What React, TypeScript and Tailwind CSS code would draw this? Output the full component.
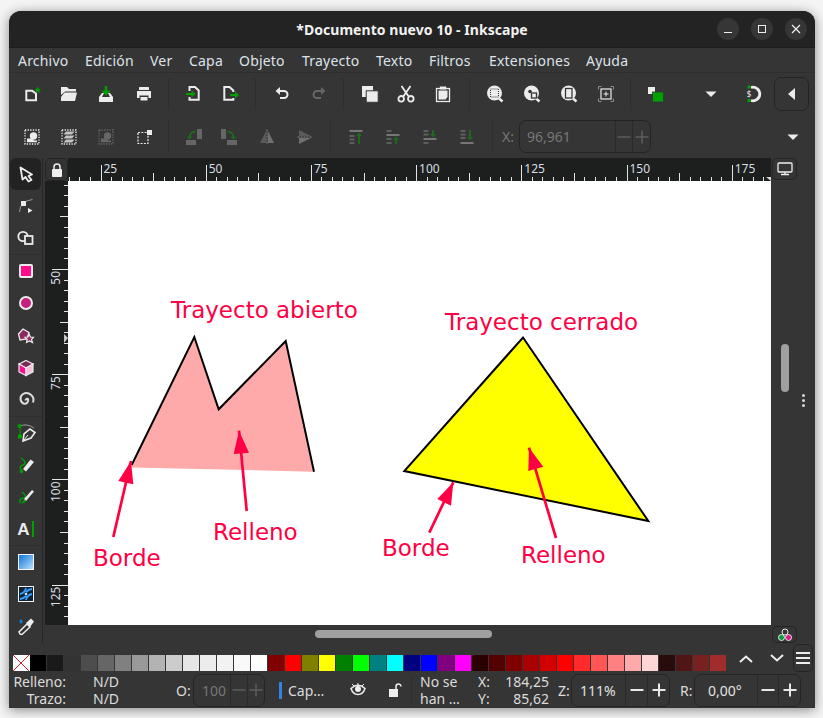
import React from "react";

const W = "#ececec";
const G = "#00a000";
const D = "#666666";
const DG = "#1d6a1d";
const RED = "#ff0044";

function I({ children, size = 24 }: { children: React.ReactNode; size?: number }) {
  return (
    <svg width={size} height={size} viewBox="-12 -12 24 24" className="block shrink-0">
      {children}
    </svg>
  );
}

function Btn({ children, cls }: { children: React.ReactNode; cls: string }) {
  return <div className={"flex items-center justify-center shrink-0 " + cls}>{children}</div>;
}

const Sep = () => <div className="w-px bg-[#2e2e2e] shrink-0 self-stretch my-[5px]" />;

/* ---------- toolbar 1 ---------- */
const NewDoc = () => (
  <I>
    <path d="M-5.700-3.300H0L4-.5V6.300H-5.700Z" fill="none" stroke={W} strokeWidth="2" />
    <polygon points="5.700,-7.500 6.600,-5.200 9,-5 7.200,-3.500 7.800,-1 5.700,-2.400 3.600,-1 4.200,-3.500 2.400,-5 4.800,-5.200" fill={G} />
  </I>
);
const OpenDoc = () => (
  <I>
    <path d="M-8-7H-2L0-5H7V-2.500H-4L-8 1Z" fill={W} />
    <path d="M-4.500-1.500H8L6 7H-8V3Z" fill={W} />
  </I>
);
const Save = () => (
  <I>
    <rect x="-1.200" y="-8" width="2.400" height="5" fill={G} />
    <polygon points="-4.500,-3.500 4.500,-3.500 0,1.500" fill={G} />
    <path d="M-4-1H-2L-4 3H4L2-1H4L7 3V8H-7V3Z" fill={W} />
  </I>
);
const Print = () => (
  <I>
    <rect x="-5" y="-7" width="10" height="3" rx=".5" fill={W} />
    <path d="M-7-3H7V4H4.500V1.500H-4.500V4H-7Z" fill={W} />
    <rect x="-3.500" y="3" width="7" height="3.500" fill={W} />
  </I>
);
const Import = () => (
  <I>
    <path d="M-3.500-3V-7H2L5.700-3.500V5.700H-3.500V3" fill="none" stroke={W} strokeWidth="2" />
    <rect x="-7" y="-1" width="6" height="2" fill={G} />
    <polygon points="-1.500,-3.500 2.500,0 -1.500,3.500" fill={G} />
  </I>
);
const Export = () => (
  <I>
    <path d="M3.300-2V-3.500L-.5-7H-5.700V5.700H3.300V4" fill="none" stroke={W} strokeWidth="2" />
    <rect x="0" y="0" width="6" height="2" fill={G} />
    <polygon points="5,-2.500 9,1 5,4.500" fill={G} />
  </I>
);
const Undo = ({ c = W, flip = false }: { c?: string; flip?: boolean }) => (
  <I>
    <g transform={flip ? "scale(-1,1)" : undefined}>
      <path d="M-3-3H2A3.500 3.500 0 0 1 2 4H-2" fill="none" stroke={c} strokeWidth="2" />
      <polygon points="-6.500,-3 -2,-7 -2,1" fill={c} />
    </g>
  </I>
);
const Copy = () => (
  <I>
    <rect x="-7" y="-8" width="11" height="11" fill={W} />
    <rect x="-2.800" y="-3.200" width="12" height="11.500" fill={W} stroke="#353535" />
  </I>
);
const Cut = () => (
  <I>
    <path d="M-4.500-8L3 3M4.500-8L-3 3" stroke={W} strokeWidth="1.800" fill="none" />
    <circle cx="-4.800" cy="4.800" r="2.800" fill="none" stroke={W} strokeWidth="1.800" />
    <circle cx="4.800" cy="4.800" r="2.800" fill="none" stroke={W} strokeWidth="1.800" />
  </I>
);
const Paste = () => (
  <I>
    <rect x="-6.500" y="-5.500" width="13" height="13" fill="none" stroke={W} strokeWidth="1.300" />
    <path d="M-4.500-3.500H4.500V3L2.500 5.500H-4.500Z" fill={W} />
    <rect x="-3.200" y="-7.500" width="6.400" height="3" fill={W} />
  </I>
);
const Mag = ({ children }: { children?: React.ReactNode }) => (
  <I>
    <path d="M4 4.500L7.500 7.500" stroke={W} strokeWidth="2.500" />
    <circle cx="-.5" cy="-1" r="7.500" fill={W} />
    {children}
  </I>
);
const ZoomSel = () => (
  <Mag>
    <rect x="-4.500" y="-5" width="8" height="8" fill="none" stroke="#353535" strokeWidth="1" strokeDasharray="1 1" />
  </Mag>
);
const ZoomDraw = () => (
  <Mag>
    <rect x="-.5" y="-1" width="5" height="5" fill={W} stroke="#353535" strokeWidth="1.300" />
    <circle cx="-2" cy="-2.500" r="1.800" fill="#353535" />
  </Mag>
);
const ZoomPage = () => (
  <Mag>
    <rect x="-3.500" y="-5.500" width="6.500" height="9.500" fill={W} stroke="#353535" strokeWidth="1.300" />
  </Mag>
);
const ZoomCenter = () => (
  <I>
    <path d="M-7.500-4.500V-7.500H-4.500M4.500-7.500H7.500V-4.500M7.500 4.500V7.500H4.500M-4.500 7.500H-7.500V4.500" fill="none" stroke="#8c8c8c" strokeWidth="1" />
    <rect x="-5" y="-5" width="10" height="10" fill="none" stroke={W} strokeWidth="1.200" />
    <path d="M-2.500 0H2.500M0-2.500V2.500" stroke={W} strokeWidth="1" />
  </I>
);
const Stack = () => (
  <I>
    <rect x="-7" y="-7" width="7" height="7" fill={W} />
    <rect x="-2.500" y="-2" width="11" height="10" fill={G} stroke="#353535" strokeWidth=".8" />
  </I>
);
const DownTri = () => (
  <I>
    <polygon points="-5.500,-2.500 5.500,-2.500 0,3" fill={W} />
  </I>
);
const Snap = () => (
  <I>
    <path d="M-3-6.500A6.800 6.800 0 1 1 -3 6.500" fill="none" stroke={W} strokeWidth="2.800" />
    <rect x="-6.500" y="-8.500" width="3" height="3" fill={G} />
    <rect x="-6.500" y="5" width="3" height="3" fill={G} />
    <text x="-5" y="3" fontSize="8" fill={W} textAnchor="middle" className="font-['Noto_Sans',sans-serif]">$</text>
  </I>
);

/* ---------- toolbar 2 ---------- */
const Dotted = ({ c = W }: { c?: string }) => (
  <rect x="-7" y="-7" width="14" height="14" fill="none" stroke={c} strokeWidth="1.300" strokeDasharray="1.300 1.300" />
);
const SelAll = ({ c = W }: { c?: string }) => (
  <I>
    <Dotted c={c} />
    <circle cx="1.500" cy="-1" r="3.700" fill={c} />
    <path d="M-5 1.500H0L2 3.500H5V5.300H-5Z" fill={c} />
  </I>
);
const SelLayers = () => (
  <I>
    <Dotted />
    <path d="M-3-5.500H5.500L3-2.500H-5.500Z" fill="#c4c4c4" />
    <path d="M-3-1.500H5.500L3 1.500H-5.500Z" fill="#c4c4c4" />
    <path d="M-3 2.500H5.500L3 5.500H-5.500Z" fill="#c4c4c4" />
  </I>
);
const Deselect = () => (
  <I>
    <rect x="-6" y="-4.500" width="10" height="11" fill="none" stroke={W} strokeWidth="1.200" strokeDasharray="2 1.300" />
    <rect x="3" y="-7" width="5" height="5" fill={W} />
  </I>
);
const Rotate = ({ flip = false }: { flip?: boolean }) => (
  <I>
    <g transform={flip ? "scale(-1,1)" : undefined}>
      <rect x="-7" y="3" width="10" height="5" fill={D} />
      <rect x="4" y="-8" width="5" height="10" fill={D} />
      <path d="M-3.500 1Q-3.500-5 2.500-5.500" fill="none" stroke={DG} strokeWidth="1.800" />
      <polygon points="-6.500,-.5 -.5,-.5 -3.500,2.500" fill={DG} />
    </g>
  </I>
);
const FlipH = () => (
  <I>
    <polygon points="-7,6 -1,-6 -1,6" fill="#5a5a5a" />
    <polygon points="1,-6 1,6 7,6" fill="#707070" />
    <path d="M0-7.500V7.500" stroke="#8a8a8a" strokeWidth="1" strokeDasharray="2 1" />
  </I>
);
const FlipV = () => (
  <I>
    <polygon points="-6,-7 -6,-1 6,-1" fill="#5a5a5a" />
    <polygon points="-6,1 -6,7 6,1" fill="#707070" />
    <path d="M-7.500 0H7.500" stroke="#8a8a8a" strokeWidth="1" strokeDasharray="2 1" />
  </I>
);
const Bars = ({ small, bar, up, y1, y2 }: { small: number[]; bar: number; up: boolean; y1: number; y2: number }) => (
  <I>
    {small.map((y) => (
      <rect key={y} x="-6.500" y={y} width="5" height="2" fill="#5e5e5e" />
    ))}
    <rect x="-6.500" y={bar} width="13" height="2" fill="#777" />
    <path d={`M3 ${y1}V${y2}`} stroke={DG} strokeWidth="2" />
    {up ? (
      <polygon points={`3,${y2 - 2.5} 0,${y2 + 1} 6,${y2 + 1}`} fill={DG} />
    ) : (
      <polygon points={`3,${y2 + 2.5} 0,${y2 - 1} 6,${y2 - 1}`} fill={DG} />
    )}
  </I>
);

/* ---------- tools ---------- */
const ToolSel = () => (
  <I>
    <path d="M-5.500-6.500L6 .5L2.500 2L5.500 6L2.500 7.500L-.5 3L-3.500 5.500Z" fill="#222" stroke={W} strokeWidth="1.800" strokeLinejoin="round" />
  </I>
);
const ToolNode = () => (
  <I>
    <path d="M-6.500 6Q-6-5 6.500-6.500" fill="none" stroke="#9a9a9a" strokeWidth="1" />
    <rect x="-5" y="-5" width="5" height="5" fill={W} />
    <polygon points="2,2 2,7 6.500,4.500" fill={W} />
  </I>
);
const ToolShape = () => (
  <I>
    <circle cx="-3" cy="-1.500" r="4.700" fill="none" stroke={W} strokeWidth="1.800" />
    <rect x="-1" y="-2" width="7.500" height="8" fill="#353535" stroke={W} strokeWidth="1.800" />
  </I>
);
const ToolRect = () => (
  <I>
    <rect x="-6" y="-6" width="12" height="12" rx="1" fill="#ff0d8f" stroke={W} strokeWidth="2" />
  </I>
);
const ToolCirc = () => (
  <I>
    <circle r="6" fill="#c6207c" stroke={W} strokeWidth="2" />
  </I>
);
const ToolStar = () => (
  <I>
    <polygon points="-3,-7 3,-3.500 1,3 -6,4 -7.500,-2" fill="#8e2a60" stroke={W} strokeWidth="1.300" />
    <polygon points="3,-2 4.500,1 7.500,1.300 5.500,3.500 6.500,6.500 3.500,5 .5,6.500 1.200,3.500 -1,1.300 2,1" fill="#8e2a60" stroke={W} strokeWidth="1.200" />
  </I>
);
const ToolBox = () => (
  <I>
    <polygon points="0,-7.500 7,-4 0,0 -7,-4" fill="#7c2a58" stroke={W} strokeWidth="1.200" />
    <polygon points="-7,-4 0,0 0,7.500 -7,4" fill="#ff0d8f" stroke={W} strokeWidth="1.200" />
    <polygon points="7,-4 0,0 0,7.500 7,4" fill="#f4c0da" stroke={W} strokeWidth="1.200" />
  </I>
);
const ToolSpiral = () => (
  <I>
    <path d="M-.5 .5A1.800 1.800 0 0 1 2 -1A3.500 3.500 0 0 1 -2.500 3.500A5.500 5.500 0 0 1 -3 -6A7 7 0 0 1 7 2.500" fill="none" stroke="#dcdcdc" strokeWidth="2" />
  </I>
);
const ToolPen = () => (
  <I>
    <path d="M-6-7V3" stroke={G} strokeWidth="1" />
    <path d="M-6-7Q1-10 8-5" fill="none" stroke="#9a9a9a" strokeWidth="1" />
    <circle cx="-6.500" cy="-7" r="2" fill={G} />
    <rect x="-8" y="1.500" width="4" height="4" fill={G} />
    <path d="M-3 8L-2 1L4-4L9-.5L5 5Z" fill="none" stroke={W} strokeWidth="1.600" />
    <path d="M-2 7L2 2" stroke={W} strokeWidth="1" />
  </I>
);
const ToolPencil = () => (
  <I>
    <path d="M-4 6Q-8 1-3 0Q2-2-5-7" fill="none" stroke={G} strokeWidth="1.500" />
    <path d="M-3 4L4.500-5.500L8-3L0 6.500Z" fill={W} />
    <circle cx="-4.500" cy="6.500" r="1.700" fill={G} />
  </I>
);
const ToolCalli = () => (
  <I>
    <path d="M-6 6Q-7 1-2 1Q2 0-4-5" fill="none" stroke={G} strokeWidth="1.500" />
    <path d="M-2 2L6-7L8-5.500L0 4Z" fill={W} />
    <path d="M-5 7L-2 2.500L.5 4.500Z" fill={G} />
  </I>
);
const ToolText = () => (
  <div className="flex items-center gap-[2px] h-[18px]">
    <span className="font-['Liberation_Sans',sans-serif] font-bold text-[17px] leading-none text-[#ececec]">A</span>
    <span className="block w-[2px] h-[16px] bg-[#00a000]" />
  </div>
);
const ToolGrad = () => (
  <I size={24}>
    <defs>
      <linearGradient id="tg" x1="0" y1="0" x2="1" y2="1">
        <stop offset="0" stopColor="#0a70d8" />
        <stop offset="1" stopColor="#bfe6ff" />
      </linearGradient>
    </defs>
    <rect x="-7.500" y="-7.500" width="15" height="15" fill="url(#tg)" stroke="#f4f4f4" strokeWidth="1" />
  </I>
);
const ToolMesh = () => (
  <I>
    <rect x="-7.500" y="-7.500" width="15" height="15" fill="#0f2436" stroke="#f4f4f4" strokeWidth="1" />
    <path d="M-6 0Q-1-1 0-6M6 0Q1 1 0 6M0-2Q3-5 6-5M0 2Q-3 5-6 5" fill="none" stroke="#3aa0ff" strokeWidth="1.800" />
    <circle r="1.300" fill="#cfeaff" />
  </I>
);
const ToolDrop = () => (
  <I>
    <path d="M-5-8Q-2-4.500-5-3.500Q-8-4.500-5-8Z" fill="#0a84e8" />
    <path d="M-6 7L-7 5L1-3L4 0L-4 7.500Z" fill="none" stroke={W} strokeWidth="1.500" />
    <path d="M0-4L5-8.500L8-5.500L4 0Z" fill={W} />
  </I>
);

const tools: [React.ReactNode, string][] = [
  [<ToolSel />, "bg-[#222222] rounded-[6px] mx-[1px]"],
  [<ToolNode />, ""],
  [<ToolShape />, "border-b border-[#2e2e2e]"],
  [<ToolRect />, ""],
  [<ToolCirc />, ""],
  [<ToolStar />, ""],
  [<ToolBox />, ""],
  [<ToolSpiral />, "border-b border-[#2e2e2e]"],
  [<ToolPen />, ""],
  [<ToolPencil />, ""],
  [<ToolCalli />, ""],
  [<ToolText />, "border-b border-[#2e2e2e]"],
  [<ToolGrad />, ""],
  [<ToolMesh />, ""],
  [<ToolDrop />, ""],
];

const swatches = [
  "#000000", "#1a1a1a", "#333333", "#4d4d4d", "#666666", "#808080", "#999999", "#b3b3b3", "#cccccc", "#e6e6e6", "#ececec", "#f2f2f2", "#f9f9f9", "#ffffff",
  "#800000", "#ff0000", "#808000", "#ffff00", "#008000", "#00ff00", "#008080", "#00ffff", "#000080", "#0000ff", "#800080", "#ff00ff",
  "#2b0000", "#550000", "#800000", "#aa0000", "#d40000", "#ff0000", "#ff2a2a", "#ff5555", "#ff8080", "#ffaaaa", "#ffd5d5",
  "#280b0b", "#501616", "#782121", "#a02c2c",
];

/* ---------- rulers ---------- */
const STEP = 10.52;
function TopRuler() {
  const ticks: React.ReactNode[] = [];
  for (let k = -3; k < 64; k++) {
    const x = 100.5 + k * STEP;
    if (x > 771) break;
    const h = k % 10 === 0 ? 16 : k % 5 === 0 ? 8 : 4;
    ticks.push(<rect key={k} x={Math.round(x)} y={181 - h} width="1" height={h} fill="#e4e4e4" />);
  }
  const labels = [25, 50, 75, 100, 125, 150, 175];
  return (
    <svg width="703" height="23" viewBox="68 158 703 23" className="block">
      {ticks}
      {labels.map((n, i) => (
        <text key={n} x={103.5 + i * 105.2} y="173" fontSize="12" fill="#d8dde2">
          {n}
        </text>
      ))}
      <polygon points="766,177 771,177 771,181" fill="#d8d8d8" />
    </svg>
  );
}
function LeftRuler() {
  const ticks: React.ReactNode[] = [];
  for (let k = -9; k < 36; k++) {
    const y = 269 + k * STEP;
    if (y < 181 || y > 625) continue;
    const h = k % 10 === 0 ? 16 : k % 5 === 0 ? 8 : 4;
    ticks.push(<rect key={k} x={68 - h} y={Math.round(y)} width={h} height="1" fill="#e4e4e4" />);
  }
  const labels = [50, 75, 100, 125];
  return (
    <svg width="23" height="444" viewBox="45 181 23 444" className="block">
      {ticks}
      {labels.map((n, i) => {
        const y = 271 + i * 105.2;
        return (
          <text key={n} x="60" y={y} fontSize="12" fill="#d8dde2" textAnchor="end" transform={`rotate(-90 60 ${y})`}>
            {n}
          </text>
        );
      })}
      <polygon points="64,334 68,338 64,343" fill="#c8c8c8" />
    </svg>
  );
}

function Arrow({ x1, y1, x2, y2, a, b }: { x1: number; y1: number; x2: number; y2: number; a: [number, number]; b: [number, number] }) {
  return (
    <>
      <line x1={x1} y1={y1} x2={x2} y2={y2} stroke={RED} strokeWidth="2.700" />
      <polygon points={`${x2},${y2} ${a[0]},${a[1]} ${b[0]},${b[1]}`} fill={RED} />
    </>
  );
}

function Drawing() {
  const t = "font-['DejaVu_Sans',sans-serif]";
  return (
    <svg width="703" height="444" viewBox="68 181 703 444" className="block">
      <polygon points="131.700,467.500 194.300,337 218.700,409.300 285.700,341 314,471.700" fill="#ffaaaa" />
      <polyline points="131.700,465 194.300,337 218.700,409.300 285.700,341 314,471.700" fill="none" stroke="#000" strokeWidth="2" />
      <polygon points="523,337.500 648.300,521 404.300,471" fill="#ffff00" stroke="#000" strokeWidth="2" />
      <Arrow x1={113.3} y1={537} x2={131} y2={461} a={[118.3, 481]} b={[133.3, 484.3]} />
      <Arrow x1={246.7} y1={511} x2={239} y2={430.7} a={[233.7, 454]} b={[249, 452.7]} />
      <Arrow x1={429.3} y1={532.7} x2={453.3} y2={482.3} a={[437.3, 499]} b={[451, 505.7]} />
      <Arrow x1={556} y1={538} x2={529} y2={447.7} a={[528.3, 471]} b={[543.3, 466.7]} />
      <g fill={RED} className={t} fontSize="23">
        <text x="171" y="318">Trayecto abierto</text>
        <text x="445" y="330">Trayecto cerrado</text>
        <text x="93" y="566">Borde</text>
        <text x="213" y="540">Relleno</text>
        <text x="382" y="556">Borde</text>
        <text x="521" y="563">Relleno</text>
      </g>
    </svg>
  );
}

function Spin({ cls, v, a, b, off = false, vcls }: { cls: string; v: string; a: string; b: string; off?: boolean; vcls: string }) {
  const c = off ? "#5c5c5c" : "#e8e8e8";
  const sw = off ? "1.500" : "2";
  const svg = (plus: boolean) => (
    <svg width="16" height="16" viewBox="-8 -8 16 16" className="block">
      <path d={plus ? "M-6.500 0H6.500M0-6.500V6.500" : "M-6.500 0H6.500"} stroke={c} strokeWidth={sw} />
    </svg>
  );
  return (
    <div className={"flex h-[33px] shrink-0 rounded-[7px] border border-[#242424] " + cls}>
      <div className={"flex items-center " + vcls + (off ? " text-[#777777]" : " text-[#e2e2e2]")}>{v}</div>
      <div className={"flex items-center justify-center border-l border-[#2a2a2a] " + a}>{svg(false)}</div>
      <div className={"flex items-center justify-center border-l border-[#2a2a2a] " + b}>{svg(true)}</div>
    </div>
  );
}

export default function App() {
  return (
    <div className="w-[823px] h-[718px] overflow-hidden bg-[#f4f4f4] pl-[9px] pt-[11px] font-['Noto_Sans',sans-serif] text-[14px] leading-[17px] text-[#dcdcdc]">
      <div className="w-[806px] h-[697px] flex flex-col rounded-t-[12px] overflow-hidden bg-[#353535] shadow-[0_2px_12px_rgba(0,0,0,0.45)]">
        {/* title */}
        <div className="h-[37px] shrink-0 grid grid-cols-[1fr_auto_1fr] items-center bg-[#232323] border-b border-[#1c1c1c]">
          <div />
          <div className="font-bold text-[#f2f2f2] text-[14px] pt-[1px] tracking-[0.05px]">*Documento nuevo 10 - Inkscape</div>
          <div className="flex justify-end gap-[12px] pr-[8px]">
            <div className="w-[22px] h-[22px] rounded-full bg-[#363636] flex items-center justify-center">
              <div className="w-[8px] h-px bg-[#eeeeee] mt-[7px]" />
            </div>
            <div className="w-[22px] h-[22px] rounded-full bg-[#363636] flex items-center justify-center">
              <div className="w-[8px] h-[8px] border border-[#eeeeee]" />
            </div>
            <div className="w-[22px] h-[22px] rounded-full bg-[#363636] flex items-center justify-center">
              <svg width="10" height="10" viewBox="0 0 10 10" className="block">
                <path d="M1 1L9 9M9 1L1 9" stroke="#eeeeee" strokeWidth="1.200" />
              </svg>
            </div>
          </div>
        </div>
        {/* menu */}
        <div className="h-[25px] shrink-0 flex items-center pl-[9px] pt-[1px] border-b border-[#2e2e2e] text-[#dde3ea] tracking-[0.2px]">
          <span className="w-[67px]">Archivo</span>
          <span className="w-[65px]">Edición</span>
          <span className="w-[39px]">Ver</span>
          <span className="w-[50px]">Capa</span>
          <span className="w-[63px]">Objeto</span>
          <span className="w-[74px]">Trayecto</span>
          <span className="w-[53px]">Texto</span>
          <span className="w-[60px]">Filtros</span>
          <span className="w-[97px]">Extensiones</span>
          <span>Ayuda</span>
        </div>
        {/* toolbar 1 */}
        <div className="h-[42px] shrink-0 flex items-stretch">
          <div className="flex items-center w-[159px] pl-[4px]">
            <Btn cls="w-[37.300px]"><NewDoc /></Btn>
            <Btn cls="w-[37.300px]"><OpenDoc /></Btn>
            <Btn cls="w-[37.300px]"><Save /></Btn>
            <Btn cls="w-[37.300px]"><Print /></Btn>
          </div>
          <Sep />
          <div className="flex items-center w-[86px] pl-[6px]">
            <Btn cls="w-[36.500px]"><Import /></Btn>
            <Btn cls="w-[36.500px]"><Export /></Btn>
          </div>
          <Sep />
          <div className="flex items-center w-[87px] pl-[7px]">
            <Btn cls="w-[37px]"><Undo /></Btn>
            <Btn cls="w-[37px]"><Undo c={D} flip /></Btn>
          </div>
          <Sep />
          <div className="flex items-center w-[125px] pl-[6px]">
            <Btn cls="w-[37px]"><Copy /></Btn>
            <Btn cls="w-[37px]"><Cut /></Btn>
            <Btn cls="w-[37px]"><Paste /></Btn>
          </div>
          <Sep />
          <div className="flex items-center w-[160px] pl-[6px]">
            <Btn cls="w-[37px]"><ZoomSel /></Btn>
            <Btn cls="w-[37px]"><ZoomDraw /></Btn>
            <Btn cls="w-[37px]"><ZoomPage /></Btn>
            <Btn cls="w-[37px]"><ZoomCenter /></Btn>
          </div>
          <Sep />
          <div className="flex items-center pl-[12px]">
            <Btn cls="w-[24px]"><Stack /></Btn>
            <Btn cls="w-[24px] ml-[32px]"><DownTri /></Btn>
            <Btn cls="w-[24px] ml-[19px]"><Snap /></Btn>
            <div className="ml-[8px] w-[35px] h-[34px] rounded-[7px] border border-[#242424] flex items-center justify-center">
              <svg width="8" height="12" viewBox="0 0 8 12" className="block">
                <polygon points="7,0 7,12 0,6" fill={W} />
              </svg>
            </div>
          </div>
        </div>
        {/* toolbar 2 */}
        <div className="h-[43px] shrink-0 flex items-stretch">
          <div className="flex items-center w-[159px] pl-[4px]">
            <Btn cls="w-[37.300px]"><SelAll /></Btn>
            <Btn cls="w-[37.300px]"><SelLayers /></Btn>
            <Btn cls="w-[37.300px]"><SelAll c={D} /></Btn>
            <Btn cls="w-[37.300px]"><Deselect /></Btn>
          </div>
          <Sep />
          <div className="flex items-center w-[161px] pl-[5px]">
            <Btn cls="w-[37.300px]"><Rotate /></Btn>
            <Btn cls="w-[37.300px]"><Rotate flip /></Btn>
            <Btn cls="w-[37.300px]"><FlipH /></Btn>
            <Btn cls="w-[37.300px]"><FlipV /></Btn>
          </div>
          <Sep />
          <div className="flex items-center w-[161px] pl-[6px]">
            <Btn cls="w-[37px]"><Bars small={[-2, 1.5, 5]} bar={-7} up y1={7} y2={-2} /></Btn>
            <Btn cls="w-[37px]"><Bars small={[-7, 1, 5]} bar={-3} up y1={7} y2={2} /></Btn>
            <Btn cls="w-[37px]"><Bars small={[-7, -3.5, 5]} bar={1} up={false} y1={-7} y2={-2} /></Btn>
            <Btn cls="w-[37px]"><Bars small={[-7, -3.5, 0]} bar={5} up={false} y1={-7} y2={1} /></Btn>
          </div>
          <Sep />
          <div className="flex items-center">
            <span className="w-[26px] pl-[9px] text-[#777777]">X:</span>
            <Spin off cls="w-[132px]" v="96,961" vcls="w-[95px] pl-[7px]" a="w-[17px]" b="w-[18px]" />
            <Btn cls="w-[24px] ml-[130px]"><DownTri /></Btn>
          </div>
        </div>
        {/* main */}
        <div className="h-[485px] shrink-0 flex">
          <div className="w-[34px] shrink-0 flex flex-col border-r border-[#262626]">
            {tools.map(([icon, cls], i) => (
              <Btn key={i} cls={"h-[32.330px] " + cls}>{icon}</Btn>
            ))}
          </div>
          <div className="w-[728px] shrink-0 flex flex-col">
            <div className="h-[23px] flex pl-[2px]">
              <div className="w-[23px] h-[23px] rounded-[5px] bg-[#333333] border border-[#242424] flex items-center justify-center">
                <svg width="12" height="14" viewBox="0 0 12 14" className="block">
                  <path d="M3 6V4A3 3 0 0 1 9 4V6" fill="none" stroke="#f0f0f0" strokeWidth="1.500" />
                  <rect x="1" y="6" width="10" height="8" rx="1" fill="#f0f0f0" />
                </svg>
              </div>
              <div className="flex-1 bg-[#1d1f1f]"><TopRuler /></div>
            </div>
            <div className="h-[444px] flex pl-[2px]">
              <div className="w-[23px] bg-[#1d1f1f]"><LeftRuler /></div>
              <div className="flex-1 bg-white"><Drawing /></div>
            </div>
            <div className="h-[18px] pt-[5px] pl-[272px]">
              <div className="w-[177px] h-[8px] rounded-full bg-[#a0a0a0]" />
            </div>
          </div>
          <div className="w-[44px] shrink-0 flex pl-[1px]">
            <div className="w-[25px] flex flex-col items-center">
              <div className="w-[25px] h-[22px] rounded-[5px] border border-[#242424] flex items-center justify-center">
                <svg width="16" height="14" viewBox="0 0 16 14" className="block">
                  <rect x="1" y="1" width="14" height="9" rx="1" fill="none" stroke="#f0f0f0" strokeWidth="1.300" />
                  <path d="M8 10V12M4 12.500H12" stroke="#f0f0f0" strokeWidth="1.300" />
                </svg>
              </div>
              <div className="w-[8px] h-[48px] rounded-full bg-[#a0a0a0] mt-[164px]" />
              <div className="mt-auto w-[25px] h-[17px] rounded-[5px] border border-[#242424] flex items-center justify-center">
                <svg width="16" height="15" viewBox="0 0 16 15" className="block">
                  <circle cx="8" cy="5" r="3" fill="none" stroke="#e8e8e8" strokeWidth="1" />
                  <circle cx="4.500" cy="10.500" r="3" fill="#0a9a3a" stroke="#e8e8e8" strokeWidth="1" />
                  <circle cx="11.500" cy="10.500" r="3" fill="#e0168c" stroke="#e8e8e8" strokeWidth="1" />
                </svg>
              </div>
            </div>
            <div className="flex-1 pl-[5px] pt-[236px] flex flex-col gap-[2px]">
              <div className="w-[3px] h-[3px] rounded-full bg-[#d8d8d8]" />
              <div className="w-[3px] h-[3px] rounded-full bg-[#d8d8d8]" />
              <div className="w-[3px] h-[3px] rounded-full bg-[#d8d8d8]" />
            </div>
          </div>
        </div>
        {/* palette */}
        <div className="h-[29px] shrink-0 flex pl-[4px]">
          <div className="flex pt-[12px]">
            <div className="w-[17px] h-[16px] bg-white">
              <svg width="17" height="16" viewBox="0 0 17 16" className="block">
                <path d="M0 0L16 16M16 0L0 16" stroke="#d81e2e" strokeWidth="1" />
              </svg>
            </div>
            {swatches.map((c, i) => (
              <div key={i} className="w-[17px] h-[16px] border-r border-[#353535]" style={{ backgroundColor: c }} />
            ))}
          </div>
          <div className="w-[31px] ml-[3px] flex items-center justify-center pt-[3px]">
            <svg width="14" height="8" viewBox="0 0 14 8" className="block">
              <path d="M1 7L7 1.500L13 7" fill="none" stroke="#eeeeee" strokeWidth="2" />
            </svg>
          </div>
          <div className="w-[31px] flex items-center justify-center">
            <svg width="14" height="8" viewBox="0 0 14 8" className="block">
              <path d="M1 1L7 6.500L13 1" fill="none" stroke="#eeeeee" strokeWidth="2" />
            </svg>
          </div>
          <div className="w-[19.500px] h-[28px] mt-[1px] ml-[1px] rounded-[5px] border border-[#242424] flex flex-col items-center justify-center gap-[3px]">
            <div className="w-[14px] h-[2px] bg-[#eeeeee]" />
            <div className="w-[14px] h-[2px] bg-[#eeeeee]" />
            <div className="w-[14px] h-[2px] bg-[#eeeeee]" />
          </div>
        </div>
        {/* status */}
        <div className="h-[36px] shrink-0 flex items-center">
          <div className="w-[57px] text-right">
            <div>Relleno:</div>
            <div>Trazo:</div>
          </div>
          <div className="w-[110px] pl-[27px]">
            <div>N/D</div>
            <div>N/D</div>
          </div>
          <span className="w-[17px]">O:</span>
          <Spin off cls="w-[72px]" v="100" vcls="w-[38px] pl-[8px]" a="w-[17px]" b="w-[17px]" />
          <div className="w-[3px] h-[17px] bg-[#3584e4] ml-[14px]" />
          <div className="w-[64px] pl-[6px]">Cap…</div>
          <Btn cls="w-[24px]">
            <svg width="16" height="14" viewBox="0 0 16 14" className="block">
              <path d="M1 5.500Q8 -1 15 5.500Q13 11.500 8 11.500Q3 11.500 1 5.500Z" fill="none" stroke="#eeeeee" strokeWidth="1.500" />
              <circle cx="8" cy="6" r="3" fill="#eeeeee" />
              <path d="M2 1L4 3M14 1L12 3M8 0V2" stroke="#eeeeee" strokeWidth="1" />
            </svg>
          </Btn>
          <Btn cls="w-[24px] ml-[13px]">
            <svg width="14" height="14" viewBox="0 0 14 14" className="block">
              <path d="M8 6V3.500A2.500 2.500 0 0 1 13 3.500" fill="none" stroke="#eeeeee" strokeWidth="1.500" />
              <rect x="1" y="6" width="9" height="8" fill="#eeeeee" />
            </svg>
          </Btn>
          <div className="w-px h-[30px] bg-[#2e2e2e] ml-[4px]" />
          <div className="w-[66px] pl-[8px]">
            <div>No se</div>
            <div>han …</div>
          </div>
          <div className="w-[71px] flex justify-between">
            <div>
              <div>X:</div>
              <div>Y:</div>
            </div>
            <div className="text-right">
              <div>184,25</div>
              <div>85,62</div>
            </div>
          </div>
          <span className="w-[22px] pl-[9px]">Z:</span>
          <Spin cls="w-[99px]" v="111%" vcls="w-[54px] pl-[8px]" a="w-[22px]" b="w-[22px]" />
          <span className="w-[24px] pl-[10px]">R:</span>
          <Spin cls="w-[107px]" v="0,00°" vcls="w-[63px] pl-[13px]" a="w-[21px]" b="w-[22px]" />
        </div>
      </div>
    </div>
  );
}
